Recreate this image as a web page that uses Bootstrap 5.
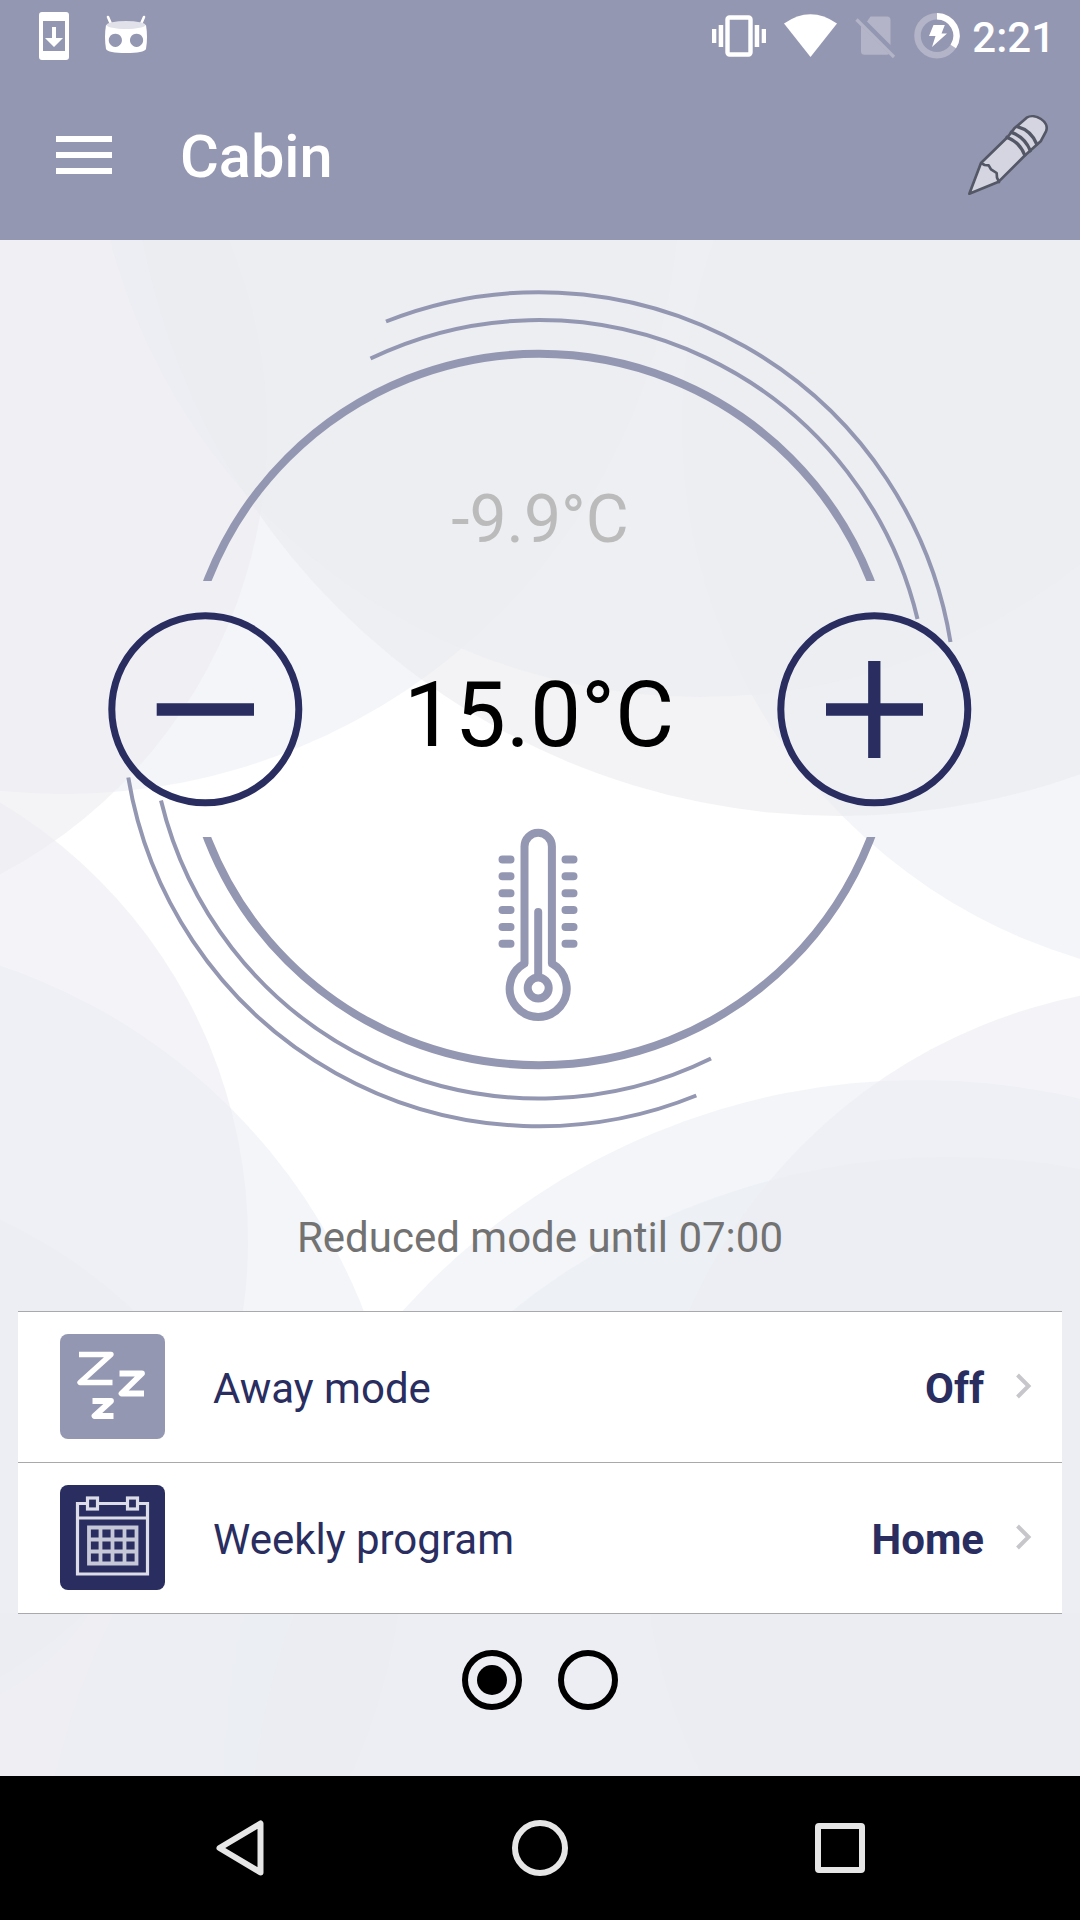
<!DOCTYPE html>
<html lang="en">
<head>
<meta charset="utf-8">
<meta name="viewport" content="width=device-width, initial-scale=1">
<title>Cabin</title>
<link href="https://cdn.jsdelivr.net/npm/bootstrap@5.3.0/dist/css/bootstrap.min.css" rel="stylesheet">
<style>
  body { font-family: Roboto, "Liberation Sans", sans-serif; width: 1080px; height: 1920px; overflow: hidden; }
  svg { display: block; flex: none; }
  .app-head { background: #9497b1; height: 240px; color: #fff; }
  .status { height: 72px; padding-left: 39px; padding-right: 27px; }
  .cid-icon { margin-left: 36px; }
  .status-icons { gap: 18px; }
  .clock { font-size: 42px; font-weight: 500; line-height: 1; padding-left: 12px; padding-top: 4px; margin-right: -2px; }
  .toolbar { height: 168px; padding: 0 23px 2px 56px; }
  .screen-title { font-size: 59.5px; font-weight: 500; line-height: 1; padding: 6px 0 0 68px; }
  .screen { height: 1536px; background: #fff; }
  .backdrop { position: absolute; inset: 0; z-index: 0; }
  .screen > :not(.backdrop) { position: relative; z-index: 1; }
  .dial { display: grid; height: 900px; flex: none; }
  .dial > * { grid-area: 1 / 1; }
  .temps { padding-top: 247px; line-height: 1; text-align: center; }
  .t-outside { font-size: 66px; color: #bbb; }
  .t-target { font-size: 91px; color: #000; margin: 117px 2px 0 0; }
  .mode-note { font-size: 42px; line-height: 1; height: 171px; padding-top: 77px; color: #727272; }
  .options { margin: 0 18px; border-radius: 0; border-top: 1px solid #a9a9ab; background: #fff; }
  .options .list-group-item { height: 151px; border: 0; border-bottom: 1px solid #a9a9ab; border-radius: 0; padding: 0 30px 2px 42px; color: #292d60; font-size: 42px; line-height: 1; background: #fff; }
  .opt-name { padding: 6px 0 0 48px; }
  .opt-value { padding: 6px 31px 0 0; }
  .pager { height: 162px; padding-bottom: 31px; gap: 36px; }
  .sysnav { height: 144px; background: #000; }
  .sysnav-keys { gap: 240px; }
</style>
<script src="https://cdn.jsdelivr.net/npm/bootstrap@5.3.0/dist/js/bootstrap.bundle.min.js"></script>
</head>
<body>
<header class="app-head">
  <div class="status d-flex align-items-center">
    <svg width="30" height="72" viewBox="39 0 30 72"><path fill="#fff" fill-rule="evenodd" d="M42 12h24q3 0 3 3v42q0 3-3 3H42q-3 0-3-3V15q0-3 3-3zM43 21v30h22V21z"/><path fill="#fff" d="M52 27h4v11h7l-9 9-9-9h7z"/></svg>
    <svg class="cid-icon me-auto" width="42" height="72" viewBox="105 0 42 72"><path d="M108 17l3 7M144 17l-3 7" stroke="#fff" stroke-width="2.600" stroke-linecap="round"/><path fill="#fff" fill-rule="evenodd" d="M106 25Q126 32 146 25Q148 37 146 49Q144 53 126 53Q108 53 106 49Q104 37 106 25zM115.300 33.700a6.600 6.600 0 1 0 .1 0zM136.500 33.700a6.600 6.600 0 1 0 .1 0z"/><ellipse cx="126" cy="25" rx="19.500" ry="4" fill="#e1e1ea"/></svg>
    <div class="status-icons d-flex">
      <svg width="54" height="72" viewBox="712 0 54 72"><rect x="727.500" y="17.500" width="23" height="37" rx="2" fill="none" stroke="#fff" stroke-width="4.400"/><path fill="#fff" d="M712 29h4.300v14H712zM718.700 25h4.500v22h-4.500zM754.700 25h4.500v22h-4.500zM761.700 29h4.300v14h-4.300z"/></svg>
      <svg width="53" height="72" viewBox="784 0 53 72"><path fill="#fff" d="M784 23.500Q810.500 5 837 23.500L810.500 57z"/></svg>
      <svg width="41" height="72" viewBox="855 0 41 72"><path fill="#b3b4c7" d="M870.500 16.500H887q3.500 0 3.500 3.500v25L867 21.500zM861 26l28 28q-1 .7-2 .7h-22.500q-3.500 0-3.500-3.500z"/><path stroke="#b3b4c7" stroke-width="3.200" d="M856.500 19.500l37.500 37.500"/></svg>
      <svg width="46" height="72" viewBox="914 0 46 72"><circle cx="937" cy="35.700" r="19.500" fill="none" stroke="#b3b4c7" stroke-width="6.500"/><path d="M937 16.200a19.500 19.500 0 0 1 16.300 30.300" fill="none" stroke="#fff" stroke-width="6.500"/><path fill="#fff" d="M933.500 25h11.300l-3.300 8.500h5.500L932 47l3.500-11H929z"/></svg>
    </div>
    <span class="clock">2:21</span>
  </div>
  <nav class="toolbar d-flex align-items-center">
    <svg width="56" height="38" viewBox="0 0 56 38"><path fill="#fff" d="M0 0h56v6H0zM0 16h56v6H0zM0 32h56v6H0z"/></svg>
    <span class="screen-title me-auto">Cabin</span>
    <svg width="97" height="90" viewBox="840 330 291 270"><g fill="#d4d5e0" stroke="#545766" stroke-width="8" stroke-linejoin="round" stroke-linecap="round"><path d="M868 581L903 489L983 411L1003 385L1040 353C1065 338 1110 365 1098 394L1082 424L1033 468L956 545Z"/><path fill="none" d="M905 490L914 495L926 496L933 508L950 519L951 533L957 546"/><path fill="none" stroke-width="10" d="M981 412Q1018 425 1034 465M994 397Q1034 411 1051 452M1012 380Q1053 391 1070 432"/></g></svg>
  </nav>
</header>

<main class="screen position-relative d-flex flex-column">
  <svg class="backdrop" width="1080" height="1536" viewBox="0 240 1080 1536">
    <g fill-opacity=".6">
      <circle cx="64" cy="178" r="616" fill="#ebeef5"/>
      <circle cx="-233" cy="432" r="500" fill="#edebf0"/>
      <circle cx="1239" cy="425" r="557" fill="#ebeef5"/>
      <circle cx="840" cy="106" r="710" fill="#ebebef"/>
      <circle cx="700" cy="88" r="609" fill="#ebecf2"/>
      <circle cx="-188" cy="1528" r="593" fill="#ebeef5"/>
      <circle cx="-262" cy="1240" r="510" fill="#edecf3"/>
      <circle cx="-215" cy="1680" r="508" fill="#eaecf1"/>
      <circle cx="920" cy="1775" r="695" fill="#ebeef5"/>
      <circle cx="1188" cy="1530" r="545" fill="#edecf3"/>
      <circle cx="950" cy="1857" r="700" fill="#eaecf1"/>
      <path fill="#ebecf2" d="M0 1613H1080V1776H0z"/>
      <path fill="#f1eff4" d="M114 1613Q75 1690 55 1776H0V1694Q50 1670 90 1613z"/>
    </g>
  </svg>

  <section class="dial">
    <svg width="1080" height="900" viewBox="0 240 1080 900" fill="none">
      <defs><clipPath id="halves"><path d="M0 240h1080v341H0zM0 837h1080v303H0z"/></clipPath></defs>
      <g stroke="#9497b1">
        <circle cx="539" cy="709.500" r="355.700" stroke-width="8" clip-path="url(#halves)"/>
        <g stroke-width="4">
          <path d="M386 321.500A416.500 416.500 0 0 1 950.500 642"/>
          <path d="M370.500 358.500A389 389 0 0 1 917.500 619"/>
          <path d="M161 800.500A389 389 0 0 0 711 1058.500"/>
          <path d="M128.300 777.500A416.500 416.500 0 0 0 696.300 1095.500"/>
        </g>
        <g stroke-width="8" stroke-linecap="round">
          <path d="M524.500 963.500V846.500a13.700 13.700 0 0 1 27.400 0V963.500A28.500 28.500 0 1 1 524.500 963.500Z" stroke-linejoin="round"/>
          <path d="M538.200 912v64"/><circle cx="538.200" cy="988" r="10.500"/>
          <path d="M502.500 859.500h8M502.500 876.300h8M502.500 893.200h8M502.500 910h8M502.500 927h8M502.500 943.800h8M565.500 859.500h8M565.500 876.300h8M565.500 893.200h8M565.500 910h8M565.500 927h8M565.500 943.800h8"/>
        </g>
      </g>
      <g stroke="#292d60">
        <circle cx="205.300" cy="709.300" r="93.500" stroke-width="7"/>
        <circle cx="874.300" cy="709.300" r="93.500" stroke-width="7"/>
        <path stroke-width="12.300" d="M156.700 709.500H254M826 709.500h97M874.300 661v97"/>
      </g>
    </svg>
    <div class="temps">
      <div class="t-outside">-9.9°C</div>
      <div class="t-target">15.0°C</div>
    </div>
  </section>

  <p class="mode-note text-center mb-0">Reduced mode until 07:00</p>

  <div class="options list-group">
    <div class="list-group-item d-flex align-items-center">
      <svg width="105" height="105" viewBox="0 0 105 105" fill="none"><rect width="105" height="105" rx="8" fill="#9497b1"/><g stroke="#fff" stroke-linejoin="round"><path stroke-width="5.400" d="M19 20.500H51L20 48.500H52.500"/><path stroke-width="5.800" d="M59.500 39.500H82L61.500 59.500H84"/><path stroke-width="5.800" d="M32.500 67H51L34.500 82H53.500"/></g></svg>
      <span class="opt-name me-auto">Away mode</span>
      <span class="opt-value fw-bold">Off</span>
      <svg width="17" height="26" viewBox="0 0 17 26"><path d="M2.500 2L13.500 13L2.500 24" fill="none" stroke="#c7c7cb" stroke-width="4"/></svg>
    </div>
    <div class="list-group-item d-flex align-items-center">
      <svg width="105" height="105" viewBox="0 0 105 105" fill="none"><rect width="105" height="105" rx="8" fill="#292d60"/><g stroke="#dcdde8" stroke-width="3.200"><path d="M27 18.500H17.500V89H87.500V18.500H78.500M38 18.500H67M17.500 33H87.500"/><rect x="27.500" y="13" width="10" height="11"/><rect x="67.500" y="13" width="10" height="11"/></g><path stroke="#c6c8d8" stroke-width="3.800" d="M29 42.500H76.500V78.500H29zM40.500 42.500v36M52.500 42.500v36M64.500 42.500v36M29 54.500h47.500M29 66.500h47.500"/></svg>
      <span class="opt-name me-auto">Weekly program</span>
      <span class="opt-value fw-bold">Home</span>
      <svg width="17" height="26" viewBox="0 0 17 26"><path d="M2.500 2L13.500 13L2.500 24" fill="none" stroke="#c7c7cb" stroke-width="4"/></svg>
    </div>
  </div>

  <div class="pager d-flex justify-content-center align-items-center">
    <svg width="60" height="60" viewBox="0 0 60 60"><circle cx="30" cy="30" r="27" fill="none" stroke="#000" stroke-width="6"/><circle cx="30" cy="30" r="15"/></svg>
    <svg width="60" height="60" viewBox="0 0 60 60"><circle cx="30" cy="30" r="27" fill="none" stroke="#000" stroke-width="6"/></svg>
  </div>
</main>

<footer class="sysnav d-flex justify-content-center align-items-center">
  <div class="sysnav-keys d-flex">
    <svg width="60" height="60" viewBox="210 1818 60 60"><path d="M219.500 1848L260.500 1823.500V1872.500Z" fill="none" stroke="#e6e6e6" stroke-width="6" stroke-linejoin="round"/></svg>
    <svg width="60" height="60" viewBox="510 1818 60 60"><circle cx="540" cy="1848" r="25" fill="none" stroke="#e6e6e6" stroke-width="6"/></svg>
    <svg width="60" height="60" viewBox="810 1818 60 60"><rect x="818" y="1826" width="44" height="44" rx="1" fill="none" stroke="#e6e6e6" stroke-width="6"/></svg>
  </div>
</footer>
</body>
</html>
